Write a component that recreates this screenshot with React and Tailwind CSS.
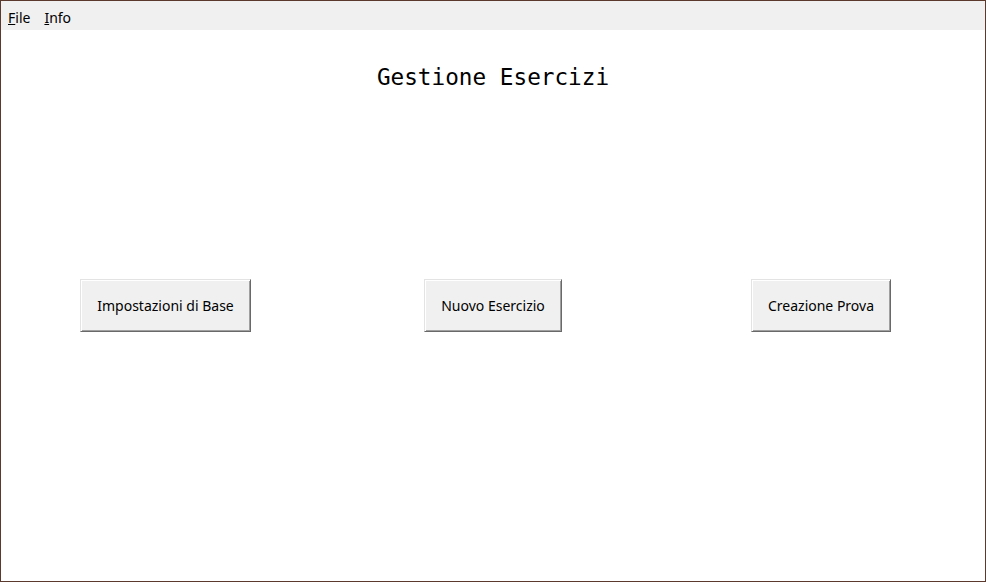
import React from "react";

function Btn({ children }) {
  return (
    <button
      className="h-[53px] px-[16px] bg-[#f0f0f0] border border-t-[#e3e3e3] border-l-[#e3e3e3] border-b-[#696969] border-r-[#696969] shadow-[inset_1px_1px_0_#ffffff,inset_-1px_-1px_0_#a0a0a0] text-[14px] text-black"
      style={{ fontFamily: '"Noto Sans", "Open Sans", sans-serif' }}
    >
      {children}
    </button>
  );
}

export default function App() {
  return (
    <div className="w-[986px] h-[582px] border border-[#5b3a2d] bg-white flex flex-col overflow-hidden">
      <div
        className="h-[29px] bg-[#f0f0f0] flex items-center gap-[14px] pl-[7px] pt-[3px] text-[14px] text-black"
        style={{ fontFamily: '"Noto Sans", "Open Sans", sans-serif' }}
      >
        <span><span className="underline">F</span>ile</span>
        <span><span className="underline">I</span>nfo</span>
      </div>
      <div className="flex-1 flex flex-col">
        <div
          className="pt-[32px] text-center text-[22.7px] leading-[30px] text-black"
          style={{ fontFamily: '"DejaVu Sans Mono", "Liberation Mono", monospace' }}
        >
          Gestione Esercizi
        </div>
        <div className="grid grid-cols-3 mt-[187px]">
          <div className="flex justify-center pl-[1px]"><Btn>Impostazioni di Base</Btn></div>
          <div className="flex justify-center"><Btn>Nuovo Esercizio</Btn></div>
          <div className="flex justify-center"><Btn>Creazione Prova</Btn></div>
        </div>
      </div>
    </div>
  );
}
